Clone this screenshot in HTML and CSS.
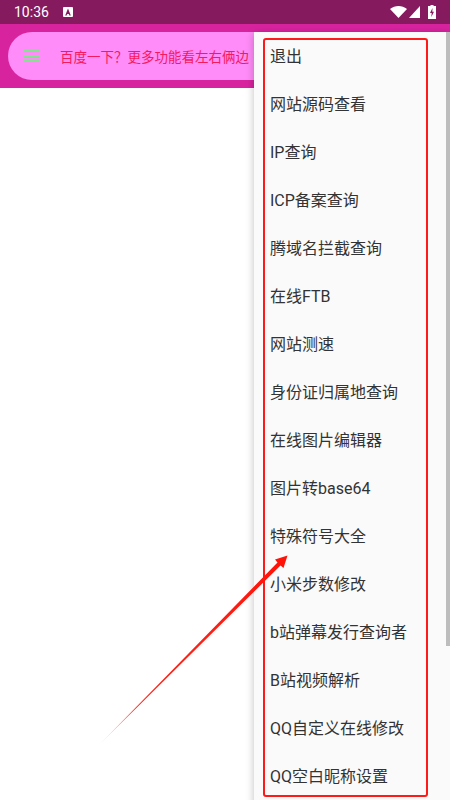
FILE: index.html
```html
<!DOCTYPE html>
<html lang="zh">
<head>
<meta charset="utf-8">
<title>Menu</title>
<link rel="stylesheet" href="styles.css">
</head>
<body>
<div class="app">
  <div class="status">
    <span class="time">10:36</span>
    <svg class="a-icon" width="10" height="10" viewBox="0 0 10 10"><rect width="10" height="10" rx="1" fill="#fff"/><path d="M5 1.500 L7.800 8.500 H6.400 L5.900 7 H4.100 L3.600 8.500 H2.200 Z" fill="#861a5e"/></svg>
    <span class="status-gap"></span>
    <svg class="wifi" width="17" height="12" viewBox="0 0 17 12"><path d="M0 3 C5 -1 12 -1 17 3 L8.500 12 Z" fill="#fff"/></svg>
    <svg class="signal" width="11" height="12" viewBox="0 0 11 12"><path d="M11 0 V12 H0 Z" fill="#fff"/></svg>
    <svg class="battery" width="8" height="14" viewBox="0 0 8 14"><path d="M2.500 0 H5.500 V1 H8 V14 H0 V1 H2.500 Z" fill="#fff"/><path d="M4.500 3 L2 8 H3.700 L3.300 12 L6 6.800 H4.300 Z" fill="#861a5e"/></svg>
  </div>
  <header class="bar">
    <div class="pill">
      <div class="burger"><i></i><i></i><i></i></div>
      <span class="pill-text">百度一下？更多功能看左右俩边</span>
    </div>
  </header>
  <nav class="menu">
    <div class="item">退出</div>
    <div class="item">网站源码查看</div>
    <div class="item">IP查询</div>
    <div class="item">ICP备案查询</div>
    <div class="item">腾域名拦截查询</div>
    <div class="item">在线FTB</div>
    <div class="item">网站测速</div>
    <div class="item">身份证归属地查询</div>
    <div class="item">在线图片编辑器</div>
    <div class="item">图片转base64</div>
    <div class="item">特殊符号大全</div>
    <div class="item">小米步数修改</div>
    <div class="item">b站弹幕发行查询者</div>
    <div class="item">B站视频解析</div>
    <div class="item">QQ自定义在线修改</div>
    <div class="item">QQ空白昵称设置</div>
  </nav>
  <div class="scroll"></div>
  <div class="frame"></div>
  <svg class="arrow" width="450" height="800" viewBox="0 0 450 800">
    <defs><linearGradient id="g" gradientUnits="userSpaceOnUse" x1="98" y1="746" x2="288" y2="556"><stop offset="0" stop-color="#ff2a1e" stop-opacity="0"/><stop offset="0.2" stop-color="#ff2a1e"/><stop offset="1" stop-color="#ff1208"/></linearGradient></defs>
    <path d="M98 746 L277.500 562.500 L275 559.500 L287.500 555.500 L283.500 568 L280.500 565.500 Z" fill="url(#g)"/>
  </svg>
</div>
</body>
</html>
```
FILE: styles.css
```css
* { box-sizing: border-box; }
html, body { margin: 0; padding: 0; }
body { font-family: "Roboto", "Noto Sans CJK SC", sans-serif; background: #fff; overflow: hidden; }
.app { position: relative; width: 450px; height: 800px; overflow: hidden; background: #fff; }
.status { height: 24px; background: #861a5e; display: flex; align-items: center; padding: 0 14px 0 14px; color: #fff; }
.time { font-size: 14px; line-height: 24px; }
.a-icon { margin-left: 14px; }
.status-gap { flex: 1; }
.signal { margin-left: 2px; }
.battery { margin-left: 8px; }
.bar { height: 64px; background: #d8239f; padding: 8px 0 8px 8px; }
.pill { height: 48px; background: #ff8cf8; border-radius: 24px; display: flex; align-items: center; padding-left: 16px; }
.burger { width: 16px; display: flex; flex-direction: column; gap: 3px; }
.burger i { display: block; height: 2px; background: #7fe68a; }
.pill-text { margin-left: 20px; font-size: 13.5px; color: #f5195f; white-space: nowrap; }
.menu { position: absolute; left: 254px; top: 32px; width: 196px; height: 780px; background: #fafafa; box-shadow: 0 2px 8px rgba(0,0,0,.25); padding-top: 1px; }
.item { height: 48px; line-height: 48px; padding-left: 16px; font-size: 16px; color: #333; white-space: nowrap; }
.scroll { position: absolute; left: 446px; top: 32px; width: 4px; height: 614px; background: #bdbdbd; }
.frame { position: absolute; left: 263px; top: 38px; width: 165px; height: 759px; border: 2px solid #ff1a1a; border-radius: 3px; }
.arrow { position: absolute; left: 0; top: 0; pointer-events: none; }
```
